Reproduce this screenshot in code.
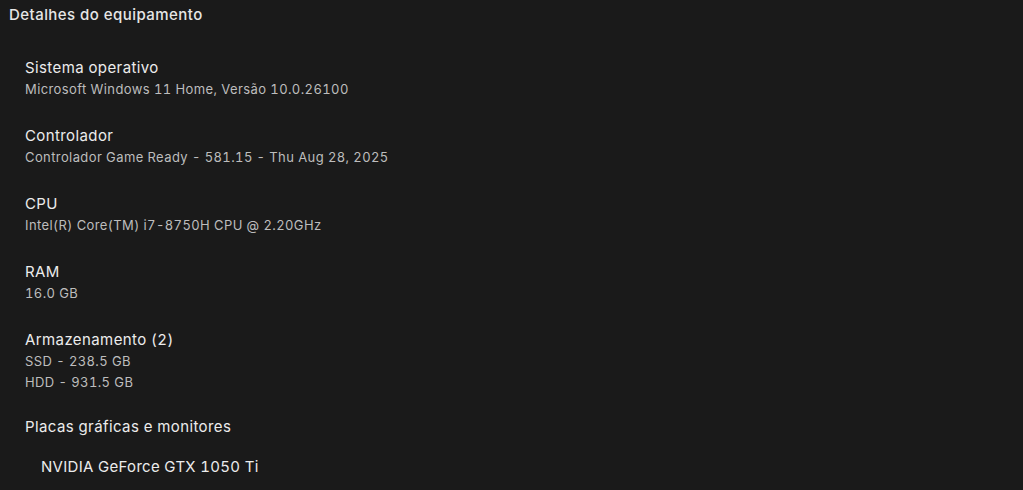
export default function App() {
  const sections = [
    { label: "Sistema operativo", values: ["Microsoft Windows 11 Home, Versão 10.0.26100"] },
    { label: "Controlador", values: ["Controlador Game Ready - 581.15 - Thu Aug 28, 2025"] },
    { label: "CPU", values: ["Intel(R) Core(TM) i7-8750H CPU @ 2.20GHz"] },
    { label: "RAM", values: ["16.0 GB"] },
    { label: "Armazenamento (2)", values: ["SSD - 238.5 GB", "HDD - 931.5 GB"] },
  ];

  return (
    <div className="h-[490px] w-full overflow-hidden bg-[#1a1a1a] font-['Inter',sans-serif] tabular-nums">
      <h1 className="px-[9px] pt-[5px] text-[15px] leading-[20px] font-medium tracking-[0.45px] text-[#e6e6e6]">
        Detalhes do equipamento
      </h1>
      <div className="pl-[25px] pt-[32px]">
        {sections.map((s, i) => (
          <div key={s.label} className={i === sections.length - 1 ? "mb-[23px]" : "mb-[25px]"}>
            <div className="text-[15px] leading-[22px] tracking-[0.4px] text-[#ececec]">{s.label}</div>
            {s.values.map((v) => (
              <div key={v} className="text-[13px] leading-[21px] tracking-[0.4px] text-[#bdbdbd]">
                {v}
              </div>
            ))}
          </div>
        ))}
        <div className="text-[15px] leading-[22px] tracking-[0.4px] text-[#ececec]">Placas gráficas e monitores</div>
        <div className="pl-[16px] pt-[18px] text-[15px] leading-[22px] tracking-[0.3px] text-[#ececec]">
          NVIDIA GeForce GTX 1050 Ti
        </div>
      </div>
    </div>
  );
}
